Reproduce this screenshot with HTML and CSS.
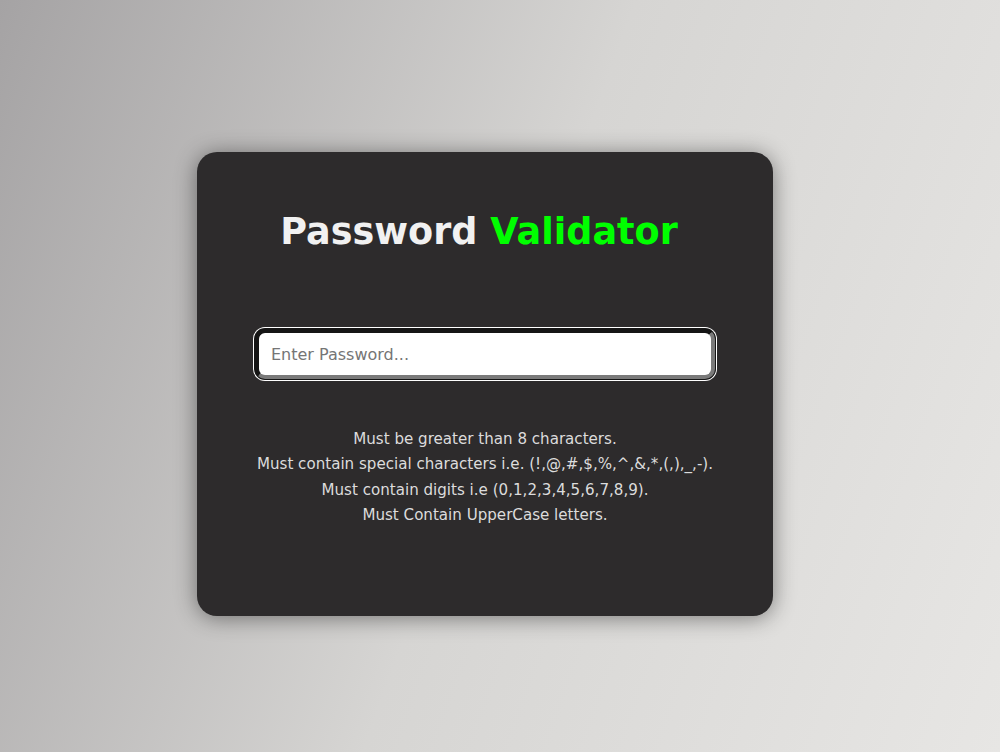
FILE: index.html
```
<!DOCTYPE html>
<html lang="en">
<head>
<meta charset="utf-8">
<title>Password Validator</title>
<link rel="stylesheet" href="styles.css">
</head>
<body>
<main class="page">
  <section class="card">
    <h1 class="title">Password <span class="accent">Validator</span></h1>
    <input class="field" type="password" placeholder="Enter Password...">
    <div class="rules">
      <p>Must be greater than 8 characters.</p>
      <p>Must contain special characters i.e. (!,@,#,$,%,^,&amp;,*,(,),_,-).</p>
      <p>Must contain digits i.e (0,1,2,3,4,5,6,7,8,9).</p>
      <p>Must Contain UpperCase letters.</p>
    </div>
  </section>
</main>
</body>
</html>
```
FILE: styles.css
```
html, body {
  margin: 0;
  padding: 0;
  height: 100%;
}
body {
  font-family: "DejaVu Sans", sans-serif;
  background: linear-gradient(110deg, #a5a3a4 0%, #d6d5d3 50%, #e7e6e4 100%);
}
.page {
  height: 752px;
  display: flex;
  justify-content: center;
  padding-top: 152px;
  padding-right: 30px;
  box-sizing: border-box;
}
.card {
  width: 576px;
  height: 464px;
  box-sizing: border-box;
  background: #2d2b2c;
  border-radius: 20px;
  box-shadow: 0 2px 22px rgba(0, 0, 0, 0.45);
  display: flex;
  flex-direction: column;
  align-items: center;
  padding-top: 59px;
}
.title {
  margin: 0;
  font-size: 36.6px;
  font-weight: bold;
  line-height: 42px;
  color: #f1f1f1;
  padding-right: 12px;
}
.accent {
  color: #00ff00;
}
.field {
  margin-top: 76px;
  width: 460px;
  height: 50px;
  box-sizing: border-box;
  border-radius: 10px;
  border: 4px solid;
  border-color: #151515 #7a7a7a #7a7a7a #151515;
  box-shadow: 0 0 0 1px #151515, 0 0 0 2px #ffffff;
  background: #ffffff;
  padding: 0 12px;
  font-family: "DejaVu Sans", sans-serif;
  font-size: 16px;
  color: #222;
  outline: none;
}
.field::placeholder {
  color: #757575;
}
.rules {
  margin-top: 48px;
  text-align: center;
  color: #dcdcdc;
  font-size: 15.1px;
  line-height: 25.3px;
}
.rules p {
  margin: 0;
}
```
